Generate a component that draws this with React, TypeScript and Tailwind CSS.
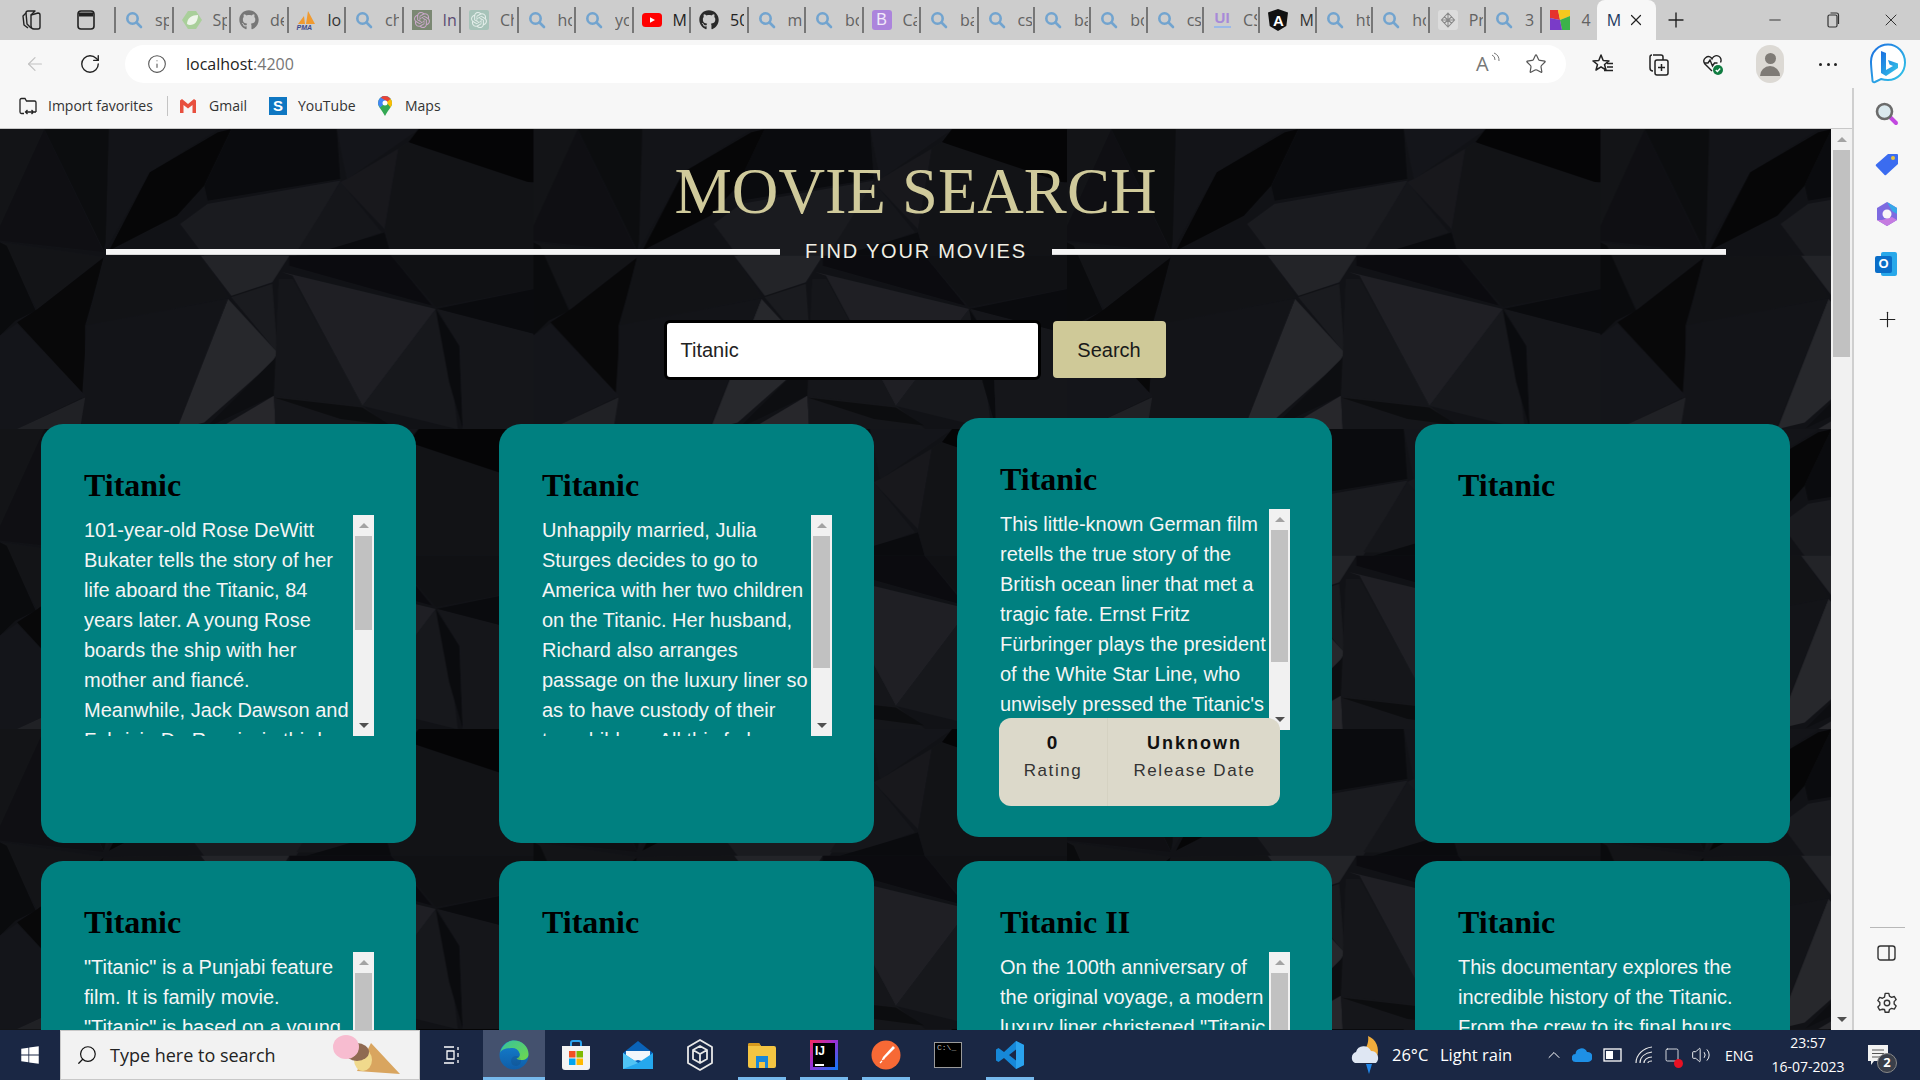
import React from "react";
import { ArrowLeft, RotateCw, Info, Star, Plus, Minus, X, Search, ChevronUp, Volume2, Square } from "lucide-react";
import { FaGithub, FaWindows } from "react-icons/fa";
import { SiOpenai } from "react-icons/si";

const POLYS: [string, string][] = [
  ["0,0 130,0 0,330", "#121317"],
  ["130,0 305,370 0,335 0,290", "#0d0e12"],
  ["130,0 320,0 320,300 305,365", "#0a0b0e"],
  ["320,0 640,0 440,130 310,360", "#121318"],
  ["440,130 640,10 680,0 600,170 520,260 320,365", "#030304"],
  ["680,0 990,0 1000,150 610,215 600,170", "#08090c"],
  ["610,225 1000,155 870,380 600,380 530,285", "#1b1c21"],
  ["990,0 1230,0 1020,150", "#14151a"],
  ["1020,150 1170,60 1130,300 1000,160", "#18181d"],
  ["1000,160 1120,310 950,370 870,370", "#15161b"],
  ["1130,310 1150,380 900,380 1100,320", "#08090c"],
  ["1200,40 1230,0 1568,0 1568,160 1500,160", "#020203"],
  ["1170,60 1200,40 1568,165 1568,380 1150,380 1130,300", "#111216"],
  ["0,340 305,385 110,540", "#121317"],
  ["0,340 20,350 105,545 45,575 0,620", "#08090b"],
  ["305,385 270,520 250,590 250,800 50,580 110,540", "#050507"],
  ["305,385 590,380 670,505 255,590", "#111216"],
  ["590,380 850,380 800,460 680,500", "#25262b"],
  ["850,380 1150,380 1270,530 850,410", "#09090d"],
  ["1150,380 1568,380 1568,480 1280,535", "#0f1014"],
  ["1280,540 1568,480 1568,615", "#08090c"],
  ["680,505 800,465 815,670", "#1b1c20"],
  ["670,510 815,670 800,700 600,880 520,900", "#2a2b30"],
  ["255,590 670,510 515,900 235,900", "#121318"],
  ["0,620 50,585 250,800 50,900 0,900", "#14151a"],
  ["50,900 250,805 235,900", "#222328"],
  ["815,680 805,800 600,900", "#0b0c10"],
  ["805,800 640,900 810,900", "#2a2a2f"],
  ["830,430 1280,540 1065,830 860,440", "#202126"],
  ["820,450 860,450 1065,830 805,800", "#15161a"],
  ["1280,540 1065,830 1345,900 1320,690", "#17181d"],
  ["1280,540 1350,650 1360,900 1320,760", "#08090c"],
  ["1285,540 1568,615 1568,900 1360,900 1350,650", "#15161b"],
  ["805,800 1065,830 1150,900 810,900", "#15161a"],
  ["805,805 1065,835 1150,890 1000,870", "#0a0b0e"],
];

function Background() {
  return (
    <svg className="absolute inset-0 h-full w-full" aria-hidden="true">
      <defs>
        <pattern id="poly" width="533.5" height="300" patternUnits="userSpaceOnUse">
          <rect width="534" height="300" fill="#111216" />
          <g transform="scale(0.3403 0.3334)" opacity="0.85">
            {POLYS.map(([p, c], i) => <polygon key={i} points={p} fill={c} />)}
          </g>
        </pattern>
      </defs>
      <rect width="100%" height="100%" fill="url(#poly)" />
    </svg>
  );
}

function Mag() {
  return (
    <svg width="20" height="20" viewBox="0 0 20 20" fill="none" stroke="#72a4cf" strokeWidth="2.6" strokeLinecap="round">
      <circle cx="8.5" cy="8.5" r="5.2" /><path d="M12.5 12.5 17 17" />
    </svg>
  );
}

type Fav = "mag" | "spring" | "gh1" | "pma" | "gpt1" | "gpt2" | "yt" | "gh2" | "bs" | "ui" | "ng" | "hex" | "color";

function Favicon({ k }: { k: Fav }) {
  switch (k) {
    case "mag": return <Mag />;
    case "spring": return (
      <svg width="20" height="20" viewBox="0 0 20 20"><path d="M6 1h8l6 9-6 9H6l-6-9z" fill="#a9cf9a" /><path d="M5 14c0-6 5-9 11-9 0 6-3 10-8 10-1 0-2-.4-3-1z" fill="#eef5ea" /></svg>
    );
    case "gh1": return <FaGithub className="h-5 w-5 text-[#777]" />;
    case "gh2": return <FaGithub className="h-5 w-5 text-[#2a2a2a]" />;
    case "pma": return (
      <div className="relative h-5 w-5">
        <svg width="20" height="20" viewBox="0 0 20 20"><path d="M1 14 7 6l1 8zM9 14l2-13 7 13z" fill="#f09a30" /></svg>
        <span className="absolute bottom-[-1px] left-0 font-['Liberation_Sans'] text-[7px] leading-none font-bold italic text-[#3b4a8c]">PMA</span>
      </div>
    );
    case "gpt1": return <div className="flex h-5 w-5 items-center justify-center bg-[#7b8873]"><SiOpenai className="h-4 w-4 text-[#c9a8c9]" /></div>;
    case "gpt2": return <div className="flex h-5 w-5 items-center justify-center rounded-[2px] bg-[#a7c3b9]"><SiOpenai className="h-4 w-4 text-[#e4eeea]" /></div>;
    case "yt": return (
      <svg width="20" height="20" viewBox="0 0 20 20"><rect y="3" width="20" height="14" rx="3.5" fill="#f00" /><path d="M8 7.2v5.600l5-2.800z" fill="#fff" /></svg>
    );
    case "bs": return <div className="flex h-5 w-5 items-center justify-center rounded-[3px] bg-[#ac84dc] font-['Liberation_Sans'] text-[16px] leading-none text-[#f2eafa]">B</div>;
    case "ui": return (
      <div className="flex h-5 w-5 flex-col items-center">
        <span className="font-['Liberation_Sans'] text-[15px] leading-[16px] font-bold text-[#a78ad8]">UI</span>
        <span className="h-[2px] w-[17px] bg-[#9bb9e8]" />
      </div>
    );
    case "ng": return (
      <div className="relative flex h-[22px] w-5 items-center justify-center">
        <svg width="20" height="22" viewBox="0 0 20 22" className="absolute inset-0"><path d="M10 0 20 3.500 18.300 17 10 22 1.700 17 0 3.500z" fill="#111" /></svg>
        <span className="relative font-['Liberation_Sans'] text-[15px] leading-none font-bold text-white">A</span>
      </div>
    );
    case "hex": return (
      <svg width="20" height="20" viewBox="0 0 20 20"><rect width="20" height="20" rx="3" fill="#dcdcdc" /><path d="M10 3 16.500 10 10 17 3.500 10z M6 6.500 14 13.500 M14 6.500 6 13.500 M10 3V17 M3.500 10H16.500" fill="none" stroke="#8a8a8a" strokeWidth="1.100" /></svg>
    );
    case "color": return (
      <svg width="20" height="20" viewBox="0 0 20 20"><path d="M0 0h8l2 10L0 8z" fill="#e5322d" /><path d="M8 0h12v6l-10 4z" fill="#f7c81e" /><path d="M20 6v14H12l-2-10z" fill="#3cb24a" /><path d="M0 8l10 2 2 10H0z" fill="#7a3bc8" /></svg>
    );
  }
}

const TABS: { f: Fav; t: string; c?: string }[] = [
  { f: "mag", t: "spring" }, { f: "spring", t: "Spring" }, { f: "gh1", t: "demo" }, { f: "pma", t: "localhost", c: "text-[#333]" },
  { f: "mag", t: "chatgpt" }, { f: "gpt1", t: "Introducing", c: "text-[#5b4a72]" }, { f: "gpt2", t: "ChatGPT" }, { f: "mag", t: "how" },
  { f: "mag", t: "youtube" }, { f: "yt", t: "Movie", c: "text-[#222]" }, { f: "gh2", t: "50 days", c: "text-[#222]" }, { f: "mag", t: "movie" },
  { f: "mag", t: "bootstrap" }, { f: "bs", t: "Cards" }, { f: "mag", t: "back" },
  { f: "mag", t: "css" }, { f: "mag", t: "back" }, { f: "mag", t: "bootstrap" }, { f: "mag", t: "css" }, { f: "ui", t: "CSS" },
  { f: "ng", t: "Movie", c: "text-[#333]" }, { f: "mag", t: "html" }, { f: "mag", t: "how" }, { f: "hex", t: "Project" }, { f: "mag", t: "3" }, { f: "color", t: "4" },
];

function TabStrip() {
  return (
    <div className="flex h-10 shrink-0 items-center bg-[#cdcdcd] font-['Open_Sans',sans-serif]">
      <svg className="ml-[21px]" width="22" height="24" viewBox="0 0 22 24" fill="none" stroke="#222" strokeWidth="1.4" strokeLinejoin="round">
        <path d="M10 7l7-2a2 2 0 0 1 2 2v12a2 2 0 0 1-2 2h-4a3 3 0 0 1-3-3z" /><path d="M10 7 14 3H7a2 2 0 0 0-2 2l1 11 4 4" /><path d="M5 5 2 8l1 9 4 3" />
      </svg>
      <svg className="ml-[32px]" width="22" height="24" viewBox="0 0 22 24" fill="none" stroke="#222" strokeWidth="1.6">
        <rect x="3" y="3" width="16" height="18" rx="3" /><path d="M4 6.500h14" strokeWidth="4" />
      </svg>
      <div className="ml-[17px] flex h-full">
        {TABS.map((t, i) => (
          <div key={i} className={"relative flex h-full shrink-0 items-center " + (i < 15 ? "w-[57.5px]" : "w-[56.4px]")}>
            <span className="absolute left-0 top-[7px] h-[26px] w-[2px] bg-[#777]" />
            <span className="ml-[10px] flex w-5 shrink-0 items-center justify-center"><Favicon k={t.f} /></span>
            <span className={"ml-[11px] w-[14px] overflow-hidden whitespace-nowrap text-[16px] " + (t.c ?? "text-[#626262]")}>{t.t}</span>
          </div>
        ))}
      </div>
      <div className="flex h-full w-[59px] shrink-0 items-center rounded-t-[8px] bg-[#f7f7f7]">
        <span className="ml-[10px] w-[16px] overflow-hidden text-[16px] text-[#1e3a5f]">M</span>
        <X className="ml-[4px] h-[18px] w-[18px] text-[#222]" strokeWidth={1.6} />
      </div>
      <Plus className="ml-[8px] h-6 w-6 text-[#222]" strokeWidth={1.4} />
      <div className="ml-auto flex h-full">
        <div className="flex w-[58px] items-center justify-center"><Minus className="h-[18px] w-[18px] text-[#333]" strokeWidth={1.3} /></div>
        <div className="flex w-[58px] items-center justify-center">
          <svg width="16" height="18" viewBox="0 0 16 18" fill="none" stroke="#333" strokeWidth="1.200"><rect x="3" y="4" width="9" height="12" rx="1.500" /><path d="M5.500 2h6a2 2 0 0 1 2 2v9" /></svg>
        </div>
        <div className="flex w-[58px] items-center justify-center"><X className="h-5 w-5 text-[#333]" strokeWidth={1.2} /></div>
      </div>
    </div>
  );
}

function Bing() {
  return (
    <svg className="ml-[31px]" width="38" height="42" viewBox="0 0 38 42">
      <defs>
        <linearGradient id="bg1" x1="0" y1="0" x2="1" y2="1"><stop offset="0" stopColor="#1c6fe0" /><stop offset="1" stopColor="#34c9e8" /></linearGradient>
      </defs>
      <path d="M19 1.500C9.500 1.500 2 9 2 18.500c0 6 1 13 1.500 19 0 1.500 1 2 2.500 1.500l6-3c2 .6 4.500 1 7 1 9.500 0 17-7.500 17-17.500S28.500 1.500 19 1.500z" fill="#fff" stroke="url(#bg1)" strokeWidth="2" />
      <path d="M12 8l5 2v17l7-4-3.500-1.500-1.500-4.500 10 3.500v4.500L17 33l-5-3z" fill="url(#bg1)" />
    </svg>
  );
}

function AddressRow() {
  return (
    <div className="flex h-12 shrink-0 items-center bg-[#f7f7f7] font-['Open_Sans',sans-serif]">
      <ArrowLeft className="ml-[24px] h-[22px] w-[22px] text-[#c2c2c2]" strokeWidth={1.3} />
      <RotateCw className="ml-[33px] h-[22px] w-[22px] text-[#222]" strokeWidth={1.5} />
      <div className="ml-[24px] flex h-[38px] w-[1441px] items-center rounded-[19px] bg-white">
        <Info className="ml-[22px] h-5 w-5 text-[#555]" strokeWidth={1.3} />
        <span className="ml-[19px] text-[16px] text-[#222]">localhost<span className="text-[#767676]">:4200</span></span>
        <div className="ml-auto flex items-center">
          <span className="relative h-6 w-[22px] text-[20px] leading-6 text-[#777]">A
            <svg className="absolute right-[-3px] top-0" width="10" height="12" viewBox="0 0 10 12" fill="none" stroke="#777" strokeWidth="1"><path d="M1 3a5 5 0 0 1 3 5M3 1a8 8 0 0 1 5 8" /></svg>
          </span>
          <Star className="ml-[27px] mr-[19px] h-[22px] w-[22px] text-[#555]" strokeWidth={1.3} />
        </div>
      </div>
      <svg className="ml-[26px]" width="22" height="22" viewBox="0 0 22 22" fill="none" stroke="#222" strokeWidth="1.500" strokeLinejoin="round">
        <path d="M9 2l2.200 5.500 5.800.4-4.500 3.600 1.500 5.500L9 13.800 4 17l1.500-5.500L1 7.900l5.800-.4z" /><path d="M15 10.500h6M15 14h6M12 17.500h9" />
      </svg>
      <svg className="ml-[33px]" width="22" height="24" viewBox="0 0 22 24" fill="none" stroke="#222" strokeWidth="1.500">
        <path d="M6 3h8a2 2 0 0 1 2 2v3" /><path d="M3 8V5a2 2 0 0 1 2-2M3 8v8a3 3 0 0 0 3 3" /><rect x="8" y="8" width="13" height="15" rx="2" /><path d="M14.500 12v7M11 15.500h7" />
      </svg>
      <svg className="ml-[32px]" width="24" height="24" viewBox="0 0 24 24" fill="none" stroke="#222" strokeWidth="1.400">
        <path d="M11 19 3.500 11.500a4.500 4.500 0 0 1 7-5.500L11 7l.5-1a4.500 4.500 0 0 1 8 4.500" /><path d="M3 11h4l2-3 2.500 6 2-3h3" />
        <circle cx="17" cy="18" r="5" fill="#107c41" stroke="none" /><path d="M14.800 18l1.600 1.600 2.800-3" stroke="#fff" />
      </svg>
      <div className="ml-[31px] flex h-[38px] w-[28px] flex-col items-center justify-center overflow-hidden rounded-[14px] bg-[#dcd9d4]">
        <span className="h-[11px] w-[11px] rounded-full bg-[#7f7b76]" />
        <span className="mt-[2px] h-[10px] w-[20px] rounded-t-[10px] bg-[#7f7b76]" />
      </div>
      <div className="ml-[34px] flex w-5 justify-between px-[1px]">
        <span className="h-[3px] w-[3px] rounded-full bg-[#222]" /><span className="h-[3px] w-[3px] rounded-full bg-[#222]" /><span className="h-[3px] w-[3px] rounded-full bg-[#222]" />
      </div>
      <Bing />
    </div>
  );
}

function BookmarkBar() {
  return (
    <div className="flex h-[41px] shrink-0 items-center border-b border-[#c8c8c8] bg-[#f7f7f7] pb-[5px] font-['Open_Sans',sans-serif] text-[14px] text-[#333]">
      <svg className="ml-[18px]" width="20" height="20" viewBox="0 0 20 20" fill="none" stroke="#222" strokeWidth="1.300">
        <path d="M2 16V4a1.500 1.500 0 0 1 1.500-1.500H7L8.500 5h8A1.500 1.500 0 0 1 18 6.500V16M2 16a1.500 1.500 0 0 0 1.500 1.500H6M18 16h-2" /><path d="M8 16h7M9.500 14 7.500 16l2 2M13.500 14l2 2-2 2" />
      </svg>
      <span className="ml-[10px] w-[104px] whitespace-nowrap">Import favorites</span>
      <span className="ml-[15px] h-5 w-px bg-[#c4c4c4]" />
      <svg className="ml-[11px]" width="18" height="16" viewBox="0 0 18 16" fill="none">
        <path d="M1 2.500V15h3.500V7L9 10.500 13.500 7v8H17V2.500L15 1 9 6 3 1z" fill="#e8503f" />
      </svg>
      <span className="ml-[12px] w-[38px]">Gmail</span>
      <div className="ml-[22px] flex h-[18px] w-[18px] items-center justify-center bg-[#0f77c2] font-['Liberation_Sans'] text-[15px] font-bold leading-none text-white">S</div>
      <span className="ml-[11px] w-[58px]">YouTube</span>
      <svg className="ml-[21px]" width="16" height="22" viewBox="0 0 16 22">
        <path d="M8 1a7 7 0 0 1 7 7c0 4-4 7-7 13C5 15 1 12 1 8a7 7 0 0 1 7-7z" fill="#34a853" />
        <path d="M8 1a7 7 0 0 1 5.500 2.700L3 12.500C2 11 1 9.600 1 8a7 7 0 0 1 7-7z" fill="#4285f4" />
        <path d="M13.500 3.700A7 7 0 0 1 15 8c0 1.500-.5 2.800-1.500 4.200L9 7z" fill="#fbbc04" />
        <path d="M8 1a7 7 0 0 1 5.500 2.700L10.500 6.500 6 4 3.800 2.400A7 7 0 0 1 8 1z" fill="#ea4335" />
        <circle cx="8" cy="8" r="2.500" fill="#fff" />
      </svg>
      <span className="ml-[12px]">Maps</span>
    </div>
  );
}

function Sidebar() {
  return (
    <div className="flex w-[68px] shrink-0 flex-col items-center border-l-2 border-[#cfcfcf] bg-[#f7f7f7] pt-px">
      <div className="flex h-[50px] items-center">
        <svg width="24" height="24" viewBox="0 0 24 24" fill="none">
          <path d="M15.500 15.500 21 21" stroke="#c248e0" strokeWidth="4" strokeLinecap="round" />
          <circle cx="9.500" cy="9.500" r="7.500" fill="#dbe9ee" stroke="#6b6b6b" strokeWidth="2.600" />
        </svg>
      </div>
      <div className="flex h-[50px] items-center">
        <svg width="24" height="24" viewBox="0 0 24 24">
          <path d="M13 2h9a1 1 0 0 1 1 1v9L11 23a1 1 0 0 1-1.400 0L1 14a1 1 0 0 1 0-1.400z" fill="#3b6cf0" /><circle cx="18" cy="6" r="2" fill="#e8c23a" />
        </svg>
      </div>
      <div className="flex h-[50px] items-center">
        <svg width="22" height="24" viewBox="0 0 22 24">
          <path d="M11 0 21 6v12l-10 6-10-6V6z" fill="#7d6ae0" /><path d="M11 0 21 6v6l-5-3z" fill="#38a8e8" /><path d="M1 18l10 6 10-6-5-3-10 3z" fill="#c57be0" />
          <circle cx="11" cy="12" r="4.500" fill="#f7f7f7" />
        </svg>
      </div>
      <div className="relative flex h-[50px] w-[24px] items-center">
        <span className="absolute left-[6px] top-[13px] h-[24px] w-[16px] rounded-[2px] bg-[#28a8ea]" />
        <span className="relative flex h-[17px] w-[17px] items-center justify-center rounded-[2px] bg-[#0a6ec8] font-['Liberation_Sans'] text-[13px] font-bold text-white">O</span>
      </div>
      <Plus className="mt-[18px] h-[25px] w-[25px] text-[#222]" strokeWidth={1.1} />
      <span className="mt-auto h-px w-[35px] bg-[#b8b8b8]" />
      <svg className="mt-[16px]" width="20" height="18" viewBox="0 0 20 18" fill="none" stroke="#333" strokeWidth="1.400"><rect x="1" y="2" width="17" height="14" rx="2.500" /><path d="M12 2v14" /></svg>
      <svg className="mb-[16px] mt-[30px]" width="22" height="22" viewBox="0 0 24 24" fill="none" stroke="#333" strokeWidth="1.500" strokeLinejoin="round">
        <path d="M10 1.500h4l.7 3 2.300 1.300 3-.9 2 3.400-2.200 2.200v2.600l2.200 2.200-2 3.400-3-.9-2.300 1.300-.7 3h-4l-.7-3L7 18.800l-3 .9-2-3.400 2.200-2.200v-2.600L2 9.300l2-3.400 3 .9 2.300-1.300z" />
        <circle cx="12" cy="12" r="3" />
      </svg>
    </div>
  );
}

function ScrollColumn({ thumb }: { thumb: number }) {
  return (
    <div className="flex h-full w-[21px] shrink-0 flex-col items-center bg-[#f1f1f1]">
      <div className="flex h-[21px] w-full shrink-0 items-center justify-center">
        <span className="h-0 w-0 border-x-[5px] border-b-[5px] border-x-transparent border-b-[#a3a3a3]" />
      </div>
      <div className="w-[17px] bg-[#c1c1c1]" style={{ height: thumb }} />
      <div className="mt-auto flex h-[21px] w-full shrink-0 items-center justify-center">
        <span className="h-0 w-0 border-x-[5px] border-t-[5px] border-x-transparent border-t-[#505050]" />
      </div>
    </div>
  );
}

type Movie = { title: string; text?: string; thumb?: number; hover?: boolean };

const MOVIES: Movie[] = [
  { title: "Titanic", thumb: 94, text: "101-year-old Rose DeWitt Bukater tells the story of her life aboard the Titanic, 84 years later. A young Rose boards the ship with her mother and fiancé. Meanwhile, Jack Dawson and Fabrizio De Rossi win third-class tickets aboard the ship. Rose tells the whole story from Titanic's departure through to its death." },
  { title: "Titanic", thumb: 132, text: "Unhappily married, Julia Sturges decides to go to America with her two children on the Titanic. Her husband, Richard also arranges passage on the luxury liner so as to have custody of their two children. All this fades when the ship hits an iceberg." },
  { title: "Titanic", thumb: 132, hover: true, text: "This little-known German film retells the true story of the British ocean liner that met a tragic fate. Ernst Fritz Fürbringer plays the president of the White Star Line, who unwisely pressed the Titanic's captain to make a record-setting crossing." },
  { title: "Titanic" },
  { title: "Titanic", thumb: 132, text: "\"Titanic\" is a Punjabi feature film. It is family movie. \"Titanic\" is based on a young man who wants to go abroad and the story of his family and friends." },
  { title: "Titanic" },
  { title: "Titanic II", thumb: 132, text: "On the 100th anniversary of the original voyage, a modern luxury liner christened \"Titanic 2,\" follows the path of its namesake. But when a tsunami hurls an ice berg into the new ship's path, the passengers must fight to survive." },
  { title: "Titanic", text: "This documentary explores the incredible history of the Titanic. From the crew to its final hours, and discovers the story of the ship." },
];

function Card({ m }: { m: Movie }) {
  return (
    <div className={"relative h-[419px] rounded-[22px] bg-[#008080] pl-[43px] pt-[43px] " + (m.hover ? "-translate-y-1.5" : "")}>
      <h2 className="font-['Liberation_Serif',serif] text-[32px] leading-[37px] font-bold text-black">{m.title}</h2>
      {m.text && (
        <div className="mt-[11px] flex h-[221px] w-[290px] font-['Liberation_Sans',sans-serif] text-[20px] leading-[30px] text-[#f5f5f5]">
          <p className="h-full min-w-0 flex-1 overflow-hidden">{m.text}</p>
          {m.thumb && <ScrollColumn thumb={m.thumb} />}
        </div>
      )}
      {m.hover && (
        <div className="absolute left-[42px] top-[300px] flex h-[88px] w-[281px] rounded-[12px] bg-[#dcd9ca] font-['Liberation_Sans',sans-serif]">
          <div className="flex w-[109px] flex-col items-center border-r border-[#d5d2c2] pt-[13px]">
            <span className="text-[19px] leading-[24px] font-bold tracking-[2px] text-[#111]">0</span>
            <span className="mt-[4px] text-[17px] leading-[24px] tracking-[1.6px] text-[#333]">Rating</span>
          </div>
          <div className="flex flex-1 flex-col items-center pl-[1px] pt-[13px]">
            <span className="text-[18px] leading-[24px] font-bold tracking-[2px] text-[#111]">Unknown</span>
            <span className="mt-[4px] text-[17px] leading-[24px] tracking-[1.6px] text-[#333]">Release Date</span>
          </div>
        </div>
      )}
    </div>
  );
}

function Page() {
  return (
    <div className="relative min-w-0 flex-1 overflow-hidden bg-[#101115]">
      <Background />
      <div className="relative">
        <h1 className="pt-[26px] text-center font-['Liberation_Serif',serif] text-[64.5px] leading-[74px] text-[#d0ca9b]">MOVIE SEARCH</h1>
        <div className="mt-[10px] flex h-6 items-center pl-[106px] pr-[105px]">
          <span className="mt-[2px] h-[6px] flex-1 border-b border-[#d8d8d8] bg-[#f5f5f5]" />
          <span className="mx-[25px] font-['Liberation_Sans',sans-serif] text-[20px] leading-6 tracking-[1.8px] text-[#f0efe4]">FIND YOUR MOVIES</span>
          <span className="mt-[2px] h-[6px] flex-1 border-b border-[#d8d8d8] bg-[#f5f5f5]" />
        </div>
        <div className="mt-[56px] flex h-[60px] items-center justify-center gap-[12px] pr-[2px] pt-px font-['Liberation_Sans',sans-serif] text-[20px]">
          <div className="flex h-[60px] w-[377px] items-center rounded-[6px] border-[3px] border-black bg-white pl-[14px] text-[#222]">Titanic</div>
          <div className="flex h-[57px] w-[113px] items-center justify-center rounded-[4px] bg-[#cfc998] text-[#1a1a1a]">Search</div>
        </div>
        <div className="mt-[45px] grid grid-cols-[375px_375px_375px_375px] gap-x-[83px] gap-y-[18px] pl-[41px]">
          {MOVIES.map((m, i) => <Card key={i} m={m} />)}
        </div>
      </div>
    </div>
  );
}

function TBIcon({ on, wide, active, children }: { on?: boolean; wide?: boolean; active?: boolean; children: React.ReactNode }) {
  return (
    <div className={"relative flex h-full w-[62px] shrink-0 items-center justify-center " + (active ? "bg-[#44516e]" : "")}>
      {children}
      {on && <span className={"absolute bottom-0 h-[3px] bg-[#76b9ed] " + (wide ? "w-[62px]" : "w-[48px]")} />}
    </div>
  );
}

function Taskbar() {
  return (
    <div className="flex h-[50px] shrink-0 items-center bg-[#1a2744] font-['Open_Sans',sans-serif] text-white">
      <div className="flex h-full w-[60px] items-center justify-center"><FaWindows className="h-[20px] w-[20px]" /></div>
      <div className="flex h-full w-[360px] items-center border border-[#c8c8c8] bg-[#f2f2f2] text-[#222]">
        <Search className="ml-[15px] h-[22px] w-[22px] -scale-x-100 text-[#111]" strokeWidth={1.3} />
        <span className="ml-[12px] text-[18px]">Type here to search</span>
        <svg className="ml-auto mr-[18px]" width="68" height="40" viewBox="0 0 68 40">
          <path d="M24 36 38 8 67 39z" fill="#d9a55f" />
          <ellipse cx="30" cy="25" rx="9" ry="11" fill="#f0d98c" />
          <ellipse cx="24" cy="17" rx="12" ry="9" fill="#8f6a52" />
          <ellipse cx="13" cy="12" rx="13" ry="12" fill="#f7bcd0" />
        </svg>
      </div>
      <div className="flex h-full w-[63px] shrink-0 items-center justify-center">
        <svg width="20" height="20" viewBox="0 0 20 20" fill="none" stroke="#fff" strokeWidth="1.300">
          <path d="M2 2h10M2 18h10M5 6h7v8H5zM16 2v3M16 8v4M16 15v3" />
        </svg>
      </div>
      <TBIcon on wide active>
        <svg width="30" height="30" viewBox="0 0 30 30">
          <defs>
            <linearGradient id="e1" x1="0" y1="0" x2="1" y2="1"><stop offset="0" stopColor="#35c1a0" /><stop offset="1" stopColor="#70d94a" /></linearGradient>
            <linearGradient id="e2" x1="0" y1="0" x2="0" y2="1"><stop offset="0" stopColor="#1480d0" /><stop offset="1" stopColor="#0f5ea8" /></linearGradient>
          </defs>
          <circle cx="15" cy="15" r="14.500" fill="url(#e2)" />
          <path d="M1 13C3 5 9 .5 15 .5c8 0 14.500 6 14.500 13.500 0 4-3 6-7 6-2 0-4-.5-5-1.500 3-1 4-3 3-5.500C19 9 16 7.500 12 8 6 8.500 2 10 1 13z" fill="url(#e1)" />
          <circle cx="17" cy="21" r="5" fill="#1a2744" opacity="0.150" />
        </svg>
      </TBIcon>
      <TBIcon>
        <svg width="28" height="32" viewBox="0 0 28 32">
          <path d="M9 8V4a2 2 0 0 1 2-2h6a2 2 0 0 1 2 2v4" fill="none" stroke="#2aa3ee" strokeWidth="2" />
          <path d="M0 7h28v21a3 3 0 0 1-3 3H3a3 3 0 0 1-3-3z" fill="#f3f3f3" />
          <rect x="7" y="12" width="6.500" height="6.500" fill="#f25022" /><rect x="14.500" y="12" width="6.500" height="6.500" fill="#7fba00" />
          <rect x="7" y="19.500" width="6.500" height="6.500" fill="#00a4ef" /><rect x="14.500" y="19.500" width="6.500" height="6.500" fill="#ffb900" />
        </svg>
      </TBIcon>
      <TBIcon>
        <svg width="30" height="30" viewBox="0 0 30 30">
          <path d="M15 1 30 13v16H0V13z" fill="#0a63b8" /><path d="M3 11h24v12L15 20 3 23z" fill="#f2f7fb" /><path d="M0 13 15 23 30 13v16H0z" fill="#25a8ee" /><path d="M0 13 15 23 0 29z" fill="#50c4f5" />
        </svg>
      </TBIcon>
      <TBIcon>
        <svg width="28" height="32" viewBox="0 0 28 32" fill="none" stroke="#e8e8e8" strokeWidth="1.800" strokeLinejoin="round">
          <path d="M14 1 26 8v16l-12 7L2 24V8z" /><path d="M14 7 21 11v9l-7 4-7-4v-9zM14 15v9M7 11l7 4 7-4" />
        </svg>
      </TBIcon>
      <TBIcon on>
        <svg width="28" height="28" viewBox="0 0 28 28">
          <path d="M0 4a2 2 0 0 1 2-2h9l2 3h13a2 2 0 0 1 2 2v18a2 2 0 0 1-2 2H2a2 2 0 0 1-2-2z" fill="#f4c542" /><path d="M0 4a2 2 0 0 1 2-2h9l2 3H0z" fill="#d79a1e" /><path d="M8 15h12v12H8z" fill="#1987d8" /><path d="M11 21h6v6h-6z" fill="#f4c542" />
        </svg>
      </TBIcon>
      <TBIcon on>
        <div className="relative h-[30px] w-[28px] bg-[linear-gradient(135deg,#fe2857,#9b2fd6_45%,#087cfa)] p-[3px]">
          <div className="flex h-full w-full flex-col bg-black pl-[2px] pt-[2px] font-['Liberation_Sans'] text-[12px] font-bold leading-none text-white">
            IJ
            <span className="mt-[7px] h-[2px] w-[9px] bg-white" />
          </div>
        </div>
      </TBIcon>
      <TBIcon on>
        <svg width="30" height="30" viewBox="0 0 30 30">
          <circle cx="15" cy="15" r="14.500" fill="#f76935" /><path d="M22 6 12 17l1.500 1.500L24 8zM12 17l-1.500 3.500L14 19z" fill="#fff" /><path d="M9 23l2-2" stroke="#fff" strokeWidth="1.300" />
        </svg>
      </TBIcon>
      <TBIcon>
        <div className="h-[26px] w-[28px] border border-[#9a9a9a] bg-black pl-[2px] pt-[1px] font-['Liberation_Mono'] text-[8px] leading-[8px] text-[#bbb]">C:\_</div>
      </TBIcon>
      <TBIcon on>
        <svg width="30" height="30" viewBox="0 0 30 30">
          <path d="M21 1 29 5v20l-8 4L9 18 3.500 22 1 20.500V9.500L3.500 8 9 12zM21 9.500 14 15l7 5.500z" fill="#1688d8" />
          <path d="M21 1 29 5v20l-8 4z" fill="#2aa3ee" />
        </svg>
      </TBIcon>
      <svg className="ml-[309px]" width="34" height="40" viewBox="0 0 34 40">
        <path d="M18 1c8 3 12 12 9 21-3-1-9-2-13-6 3-4 5-10 4-15z" fill="#f0ac3c" />
        <path d="M5 28a6 6 0 0 1 1-11 8 8 0 0 1 15-1 7 7 0 0 1 5 12z" fill="#dfe7f3" />
        <path d="M16 29h6l-3 10z" fill="#2186e8" />
      </svg>
      <span className="ml-[8px] w-[48px] text-[16.500px]">26°C</span>
      <span className="w-[100px] text-[16.500px]">Light rain</span>
      <div className="flex w-[27px] justify-center"><ChevronUp className="h-5 w-5" strokeWidth={1.2} /></div>
      <div className="flex w-[30px] justify-center">
        <svg width="20" height="16" viewBox="0 0 20 16"><path d="M4 15a4 4 0 0 1-.5-8A6 6 0 0 1 15 5a5 5 0 0 1 1 10z" fill="#1e90e6" /></svg>
      </div>
      <div className="flex w-[32px] justify-center">
        <svg width="20" height="14" viewBox="0 0 20 14"><rect x="1" y="1" width="17" height="12" fill="none" stroke="#fff" strokeWidth="1.300" /><rect x="3" y="3" width="7" height="8" fill="#fff" /></svg>
      </div>
      <div className="flex w-[29px] justify-center">
        <svg width="18" height="18" viewBox="0 0 18 18" fill="none" stroke="#e8e8e8" strokeWidth="1.200"><path d="M1 17C1 9 8 2 17 1M5 17c0-6 5-10 12-11M9 17c0-3 3-6 8-6" /><path d="M13 17c0-1 1-2 4-2" /></svg>
      </div>
      <div className="flex w-[28px] justify-center">
        <div className="relative">
          <Square className="h-[18px] w-[16px] text-white" strokeWidth={1.2} />
          <span className="absolute bottom-[-4px] right-[-3px] h-[9px] w-[9px] rounded-full bg-[#e81123]" />
        </div>
      </div>
      <div className="flex w-[30px] justify-center"><Volume2 className="h-5 w-5" strokeWidth={1.1} /></div>
      <span className="w-[54px] pl-[9px] text-[14px]">ENG</span>
      <div className="flex w-[76px] flex-col items-center text-[14px] leading-[24px]">
        <span>23:57</span><span>16-07-2023</span>
      </div>
      <div className="flex flex-1 justify-center pr-[10px]">
        <div className="relative">
          <svg width="20" height="20" viewBox="0 0 20 20"><path d="M0 0h20v16H6l-3 4v-4H0z" fill="#f2f2f2" /><path d="M4 5h12M4 8.500h12M4 12h8" stroke="#555" strokeWidth="1" /></svg>
          <span className="absolute bottom-[-8px] right-[-9px] flex h-5 w-5 items-center justify-center rounded-full border border-[#888] bg-[#3a3f4a] text-[13px] font-bold">2</span>
        </div>
      </div>
    </div>
  );
}

export default function App() {
  return (
    <div className="flex h-[1080px] w-[1920px] flex-col overflow-hidden">
      <TabStrip />
      <AddressRow />
      <div className="flex min-h-0 flex-1">
        <div className="flex w-[1852px] shrink-0 flex-col">
          <BookmarkBar />
          <div className="flex min-h-0 flex-1">
            <Page />
            <ScrollColumn thumb={207} />
          </div>
        </div>
        <Sidebar />
      </div>
      <Taskbar />
    </div>
  );
}
